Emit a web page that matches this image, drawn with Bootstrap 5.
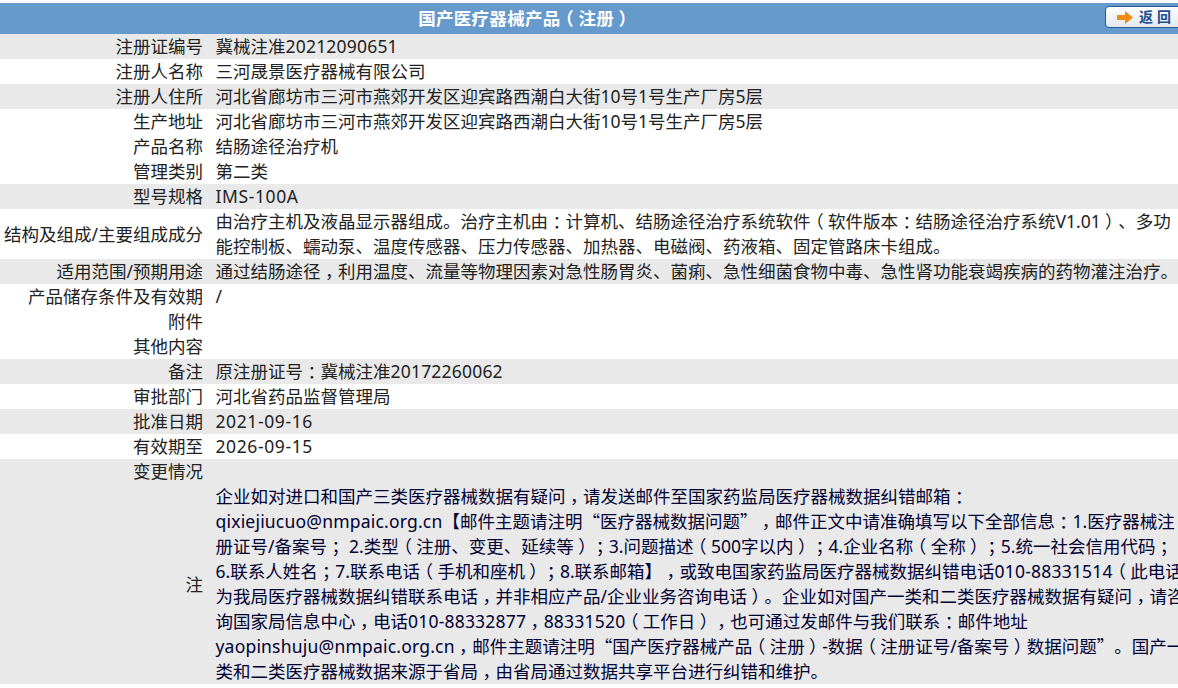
<!DOCTYPE html>
<html lang="zh"><head><meta charset="utf-8"><title>国产医疗器械产品（注册）</title>
<link href="https://cdn.jsdelivr.net/npm/bootstrap@5.3.0/dist/css/bootstrap.min.css" rel="stylesheet">
<style>
html,body{overflow:hidden;height:688px;background:#fff}
body{font-family:"Noto Sans","Noto Sans CJK SC",sans-serif;font-size:17.5px;color:#222;width:1178px;text-spacing-trim:space-all}
.sheet{width:1186px;padding-top:3px}
.topbar{height:31px;background:#6699cc;position:relative}
.toptitle{width:1050px;line-height:31px;color:#fff;font-weight:700;font-size:17.5px;letter-spacing:.3px;text-align:center}
.backbtn{position:absolute;left:1105px;top:3px;width:81px;height:22px;border:1px solid #2a5a94;border-radius:4px;background:linear-gradient(#fff,#e4e8ee);color:#1d4f8c;font-weight:700;font-size:14px;line-height:20px;padding:0 0 0 33px;text-align:left;letter-spacing:4px}
.backbtn svg{position:absolute;left:10px;top:4px}
.datatab{width:1186px;table-layout:fixed;border-collapse:collapse}
.datatab td{padding:0;line-height:25px;vertical-align:middle;color:#222}
.datatab .lab{width:203px;text-align:right}
.datatab .val{padding-left:12.500px}
.datatab tr.alt td{background:#e9e9e9}
.datatab td.notetext{color:#000033}
.pn{font-family:"Noto Sans CJK SC",sans-serif;line-height:1;font-feature-settings:"halt";padding:0 .25em}
.qt{font-family:"Noto Sans CJK SC",sans-serif;line-height:1}
.ltn{letter-spacing:.2px}
.ltw{letter-spacing:.6px}
</style></head><body>
<div class="sheet">
<div class="topbar d-flex"><div class="toptitle">国产医疗器械产品<span class="pn">（</span>注册<span class="pn">）</span></div>
<button class="backbtn" type="button"><svg width="18" height="13" viewBox="0 0 18 13"><path d="M1 4h8V0l8 6.500-8 6.500V9H1z" fill="#f08c10"/></svg>返回</button></div>
<table class="datatab"><tbody>
<tr class="alt"><td class="lab">注册证编号</td><td class="val">冀械注准<span class="ltn">20212090651</span></td></tr>
<tr><td class="lab">注册人名称</td><td class="val">三河晟景医疗器械有限公司</td></tr>
<tr class="alt"><td class="lab">注册人住所</td><td class="val">河北省廊坊市三河市燕郊开发区迎宾路西潮白大街10号1号生产厂房5层</td></tr>
<tr><td class="lab">生产地址</td><td class="val">河北省廊坊市三河市燕郊开发区迎宾路西潮白大街10号1号生产厂房5层</td></tr>
<tr><td class="lab">产品名称</td><td class="val">结肠途径治疗机</td></tr>
<tr><td class="lab">管理类别</td><td class="val">第二类</td></tr>
<tr class="alt"><td class="lab">型号规格</td><td class="val"><span class="ltw">IMS-100A</span></td></tr>
<tr><td class="lab">结构及组成/主要组成成分</td><td class="val">由治疗主机及液晶显示器组成。治疗主机由<span class="pn">：</span>计算机、结肠途径治疗系统软件<span class="pn">（</span>软件版本<span class="pn">：</span>结肠途径治疗系统V1.01<span class="pn">）</span>、多功能控制板、蠕动泵、温度传感器、压力传感器、加热器、电磁阀、药液箱、固定管路床卡组成。</td></tr>
<tr class="alt"><td class="lab">适用范围/预期用途</td><td class="val">通过结肠途径<span class="pn">，</span>利用温度、流量等物理因素对急性肠胃炎、菌痢、急性细菌食物中毒、急性肾功能衰竭疾病的药物灌注治疗。</td></tr>
<tr><td class="lab">产品储存条件及有效期</td><td class="val">/</td></tr>
<tr><td class="lab">附件</td><td class="val"></td></tr>
<tr><td class="lab">其他内容</td><td class="val"></td></tr>
<tr class="alt"><td class="lab">备注</td><td class="val">原注册证号<span class="pn">：</span>冀械注准<span class="ltn">20172260062</span></td></tr>
<tr><td class="lab">审批部门</td><td class="val">河北省药品监督管理局</td></tr>
<tr class="alt"><td class="lab">批准日期</td><td class="val"><span class="ltw">2021-09-16</span></td></tr>
<tr><td class="lab">有效期至</td><td class="val"><span class="ltw">2026-09-15</span></td></tr>
<tr class="alt"><td class="lab">变更情况</td><td class="val"></td></tr>
<tr class="alt"><td class="lab">注</td><td class="val notetext">企业如对进口和国产三类医疗器械数据有疑问<span class="pn">，</span>请发送邮件至国家药监局医疗器械数据纠错邮箱<span class="pn">：</span><br><span class="ltn">qixiejiucuo@nmpaic.org.cn</span>【邮件主题请注明<span class="qt">“</span>医疗器械数据问题<span class="qt">”</span><span class="pn">，</span>邮件正文中请准确填写以下全部信息<span class="pn">：</span>1.医疗器械注册证号/备案号<span class="pn">；</span> 2.类型<span class="pn">（</span>注册、变更、延续等<span class="pn">）</span><span class="pn">；</span>3.问题描述<span class="pn">（</span>500字以内<span class="pn">）</span><span class="pn">；</span>4.企业名称<span class="pn">（</span>全称<span class="pn">）</span><span class="pn">；</span>5.统一社会信用代码<span class="pn">；</span>6.联系人姓名<span class="pn">；</span>7.联系电话<span class="pn">（</span>手机和座机<span class="pn">）</span><span class="pn">；</span>8.联系邮箱】<span class="pn">，</span>或致电国家药监局医疗器械数据纠错电话<span class="ltn">010-88331514</span><span class="pn">（</span>此电话为我局医疗器械数据纠错联系电话<span class="pn">，</span>并非相应产品/企业业务咨询电话<span class="pn">）</span>。企业如对国产一类和二类医疗器械数据有疑问<span class="pn">，</span>请咨询国家局信息中心<span class="pn">，</span>电话<span class="ltn">010-88332877</span><span class="pn">，</span><span class="ltn">88331520</span><span class="pn">（</span>工作日<span class="pn">）</span><span class="pn">，</span>也可通过发邮件与我们联系<span class="pn">：</span>邮件地址<br><span class="ltn">yaopinshuju@nmpaic.org.cn</span><span class="pn">，</span>邮件主题请注明<span class="qt">“</span>国产医疗器械产品<span class="pn">（</span>注册<span class="pn">）</span>-数据<span class="pn">（</span>注册证号/备案号<span class="pn">）</span>数据问题<span class="qt">”</span>。国产一类和二类医疗器械数据来源于省局<span class="pn">，</span>由省局通过数据共享平台进行纠错和维护。</td></tr>
</tbody></table>
</div>
</body></html>
